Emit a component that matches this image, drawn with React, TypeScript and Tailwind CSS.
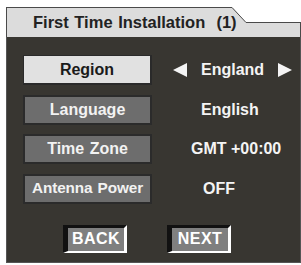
import React from "react";

const font = { fontFamily: '"Liberation Sans", Arial, sans-serif' };

function Label({ text, active }: { text: string; active?: boolean }) {
  return (
    <div
      className={
        active
          ? "w-[129px] h-[30px] flex items-center justify-center bg-[#e1e1e1] border border-[#2a2a2a] border-r-2 border-b-2 text-[#1a1a1a] text-[16px] font-bold [word-spacing:1px] whitespace-nowrap"
          : "w-[129px] h-[30px] flex items-center justify-center bg-[#6d6d6d] border-2 border-[#2b2b2b] text-[#f2f2f2] text-[16px] font-bold [word-spacing:1px] whitespace-nowrap"
      }
    >
      <span className={text.length > 10 ? "text-[15.3px] tracking-[-0.1px]" : ""}>{text}</span>
    </div>
  );
}

function Tri({ dir }: { dir: "l" | "r" }) {
  return (
    <svg width="14" height="14" viewBox="0 0 14 14" className="block">
      {dir === "l" ? (
        <polygon points="0,7 14,0 14,14" fill="#f4f4f4" />
      ) : (
        <polygon points="14,7 0,0 0,14" fill="#f4f4f4" />
      )}
    </svg>
  );
}

function Btn({ text }: { text: string }) {
  return (
    <div className="w-[64px] h-[28px] flex items-center justify-center bg-[#7f7f7f] border-l-[5px] border-t-[3px] border-r-[3px] border-b-[2px] border-l-[#111] border-t-[#111] border-r-white border-b-white text-white text-[16px] font-bold tracking-[0.5px]">
      {text}
    </div>
  );
}

export default function App() {
  return (
    <div className="w-[301px] h-[265px] bg-white pt-[7px] pl-[6px]" style={font}>
      <div className="w-[295px]">
        {/* header tab */}
        <div className="flex h-[30px] bg-[#dcdcdc]">
          <div className="w-[226px] h-full border-t border-l border-[#4a4a4a] flex items-center pl-[26px]">
            <span className="text-[16.5px] font-bold text-[#222] whitespace-nowrap [word-spacing:1px]">
              First Time Installation{"\u00a0"} (1)
            </span>
          </div>
          <svg width="14" height="30" viewBox="0 0 14 30" className="block">
            <polygon points="0,0 14,0 14,15" fill="#ffffff" />
            <line x1="0" y1="0.5" x2="14" y2="15.5" stroke="#4a4a4a" strokeWidth="1" />
          </svg>
          <div className="flex-1 flex flex-col">
            <div className="h-[15px] bg-white" />
            <div className="h-[15px] border-t border-r border-[#4a4a4a]" />
          </div>
        </div>
        {/* body */}
        <div className="h-[226px] bg-[#383631] border-l border-r border-b border-[#555] pt-[18px] pl-[16px]">
          <div className="flex flex-col gap-[9.5px] text-[16px] font-bold text-[#f4f4f4]">
            <div className="flex items-center">
              <Label text="Region" active />
              <div className="ml-[21px] flex items-center">
                <Tri dir="l" />
                <span className="ml-[14px] mr-[14px]">England</span>
                <Tri dir="r" />
              </div>
            </div>
            <div className="flex items-center">
              <Label text="Language" />
              <span className="ml-[49px]">English</span>
            </div>
            <div className="flex items-center">
              <Label text="Time Zone" />
              <span className="ml-[39px]">GMT +00:00</span>
            </div>
            <div className="flex items-center">
              <Label text="Antenna Power" />
              <span className="ml-[51px]">OFF</span>
            </div>
          </div>
          <div className="flex mt-[21px] ml-[40px] gap-[40px]">
            <Btn text="BACK" />
            <Btn text="NEXT" />
          </div>
        </div>
      </div>
    </div>
  );
}
